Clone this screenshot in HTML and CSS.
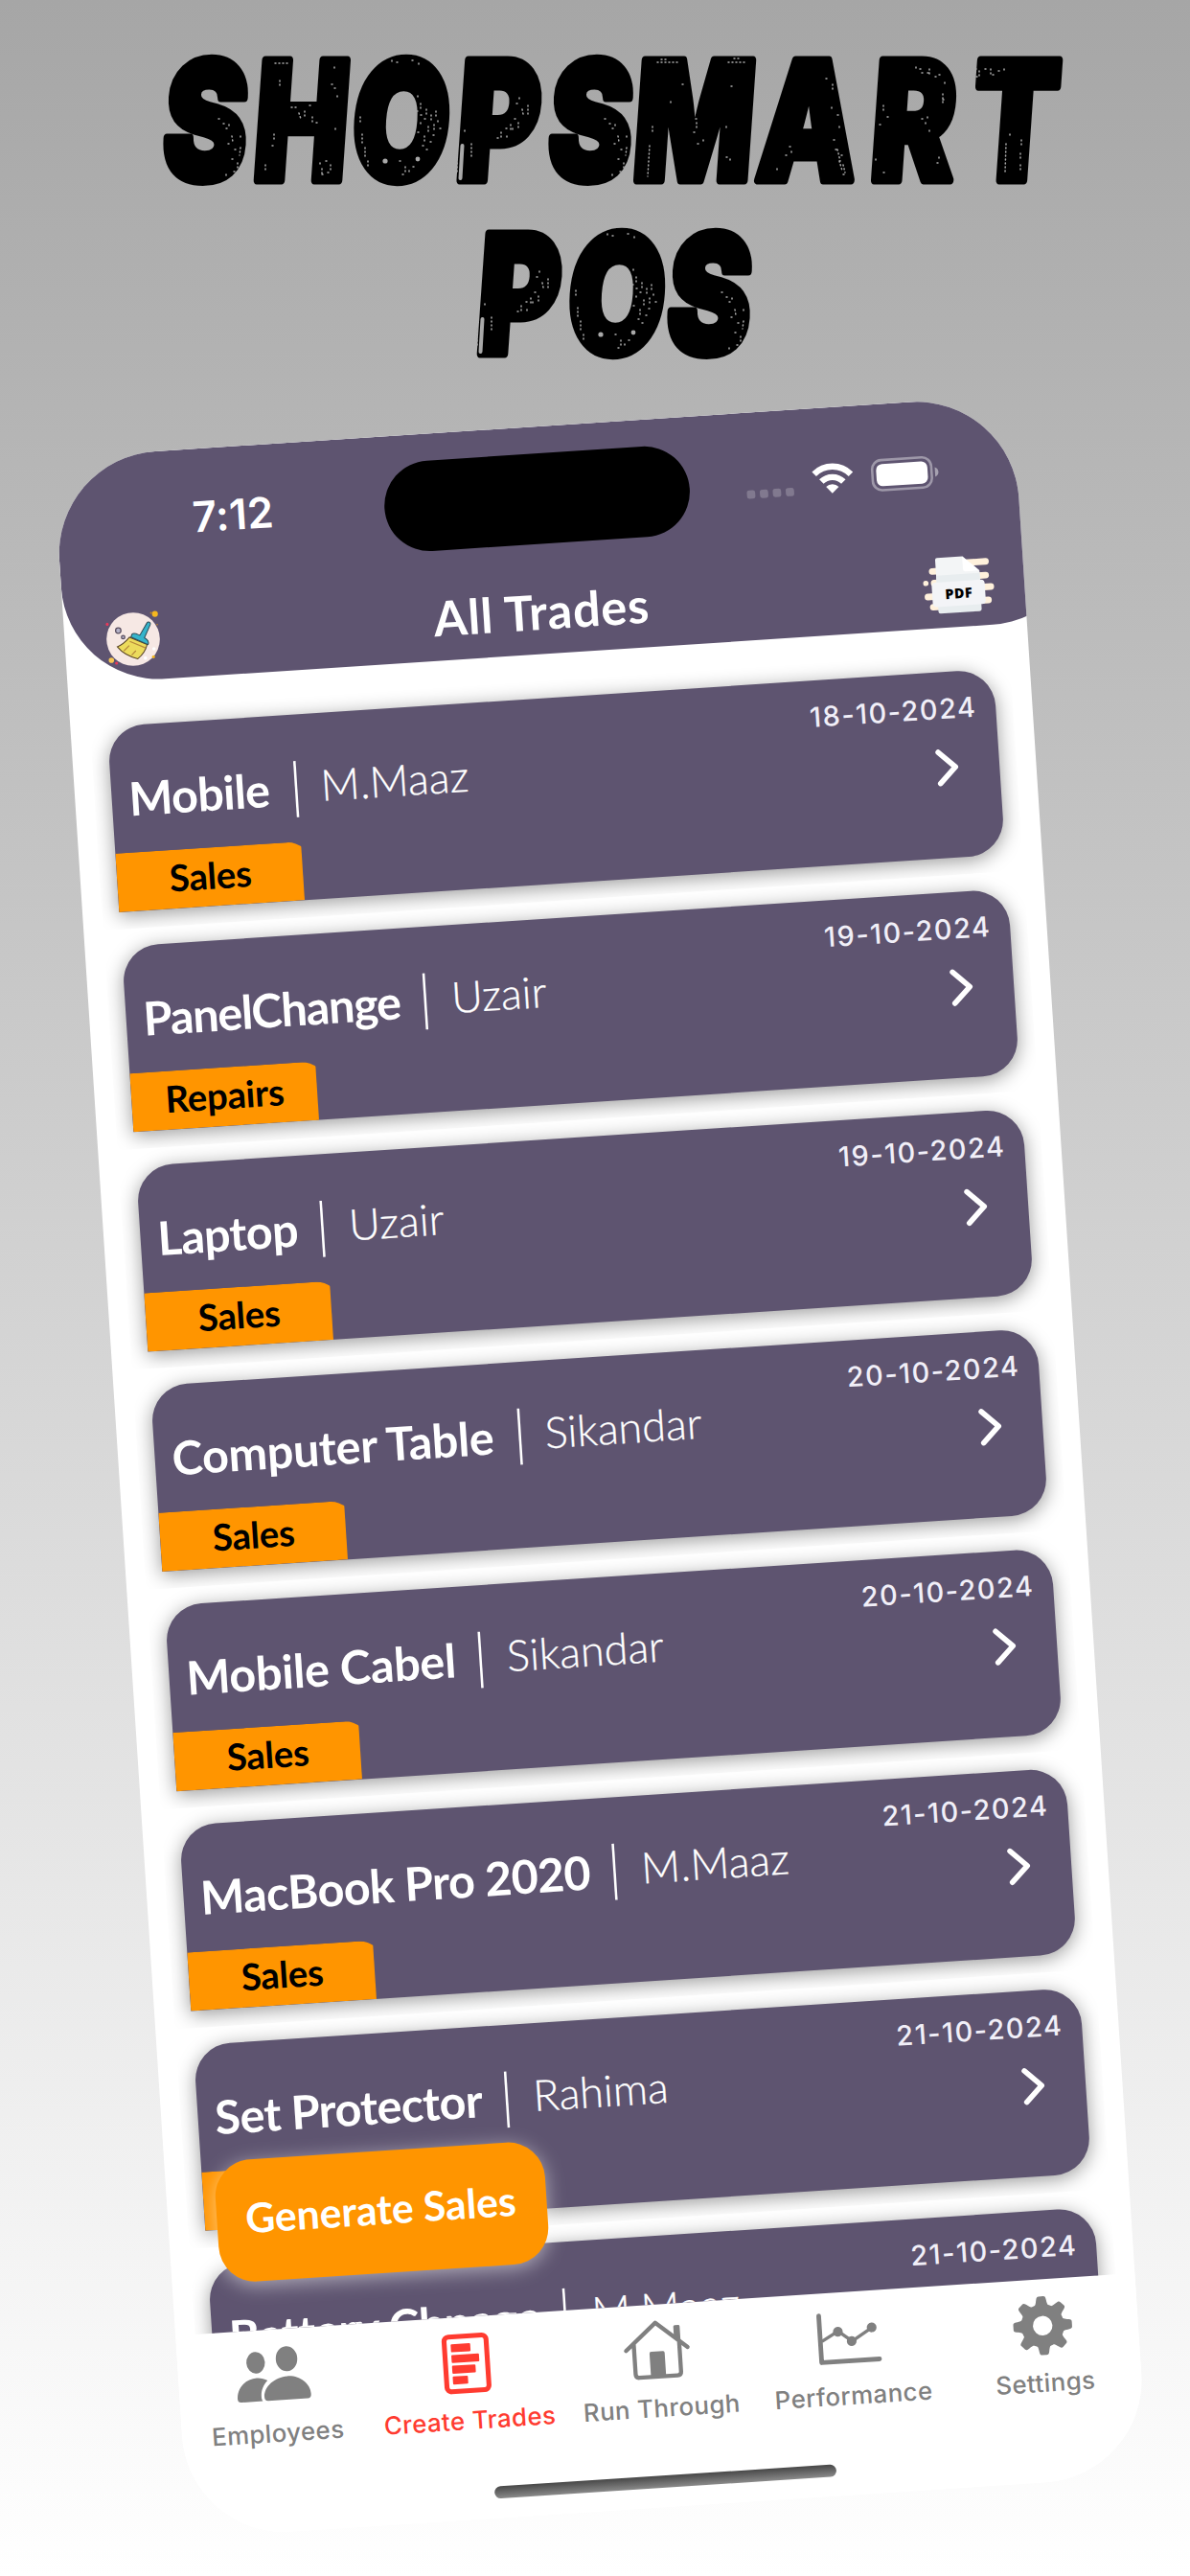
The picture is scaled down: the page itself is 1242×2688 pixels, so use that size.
FILE: index.html
```html
<!DOCTYPE html>
<html lang="en">
<head>
<meta charset="utf-8">
<title>ShopSmart POS</title>
<link rel="stylesheet" href="styles.css">
</head>
<body>
<main class="poster">
  <h1 class="headline">
    <svg width="1242" height="420" viewBox="0 0 1242 420">
      <defs>
        <g id="wear-s">
          <path d="M64 76h2M70 84l1 6M73 98h3M79 96l-1 8M70 108h4M76 112v5M61 71h2M67 72v3M79 84v3M66 92h1M72 121h2M64 124v2M56 66h1"/>
        </g>
        <g id="wear-o">
          <path d="M36 7v4M41 9h4M57 7h4M64 10v3M63 44v4M66 52v5M72 58v6M77 64v8M82 60v6M80 74v5M74 76v8M70 86v5M66 72v4M63 82h3M76 92h4M84 70v4M62 60h2M70 68h2M86 78h2M68 96h2M66 64h2M79 85h3M72 100h3M5 84v12M8 98v10M3 66v8M11 112v6M50 118v6M47 126h3M54 122v4M58 118h2M44 112h2"/>
          <circle cx="29" cy="112" r="2.6" class="dot"/><circle cx="63" cy="110" r="2.4" class="dot"/>
        </g>
        <g id="wear-p">
          <path d="M19 92v14M4 104v20M69 44v4M72 56l1 5M64 66h3M60 72v5M55 76h2M50 80v8M56 84v4M62 76v4M46 86h3M78 52v12M66 50h2M68 70v5M12 78v3"/>
          <path d="M9.500 94l-2 34" class="gash"/>
        </g>
      </defs>
      <g class="letters">
        <text transform="translate(-5 188) skewX(-4) scale(.76 1)" x="284 415.800 552.600 686.500 813 955 1111 1256.500 1396">SHOPSMART</text>
        <text transform="translate(-5 368.500) skewX(-4) scale(.76 1)" x="714.500 848.700 976">POS</text>
      </g>
      <g class="wear">
        <use href="#wear-s" x="172" y="58"/>
        <use href="#wear-o" x="373" y="56"/>
        <use href="#wear-p" x="473" y="58"/>
        <use href="#wear-s" x="575" y="58"/>
        <use href="#wear-p" x="494" y="239"/>
        <use href="#wear-o" x="598" y="237"/>
        <use href="#wear-s" x="697" y="239"/>
        <path d="M287 66h14M292 84v8M304 112h5M312 118l2 6M318 116v5M323 110h4M326 122v5M330 128h3M349 70v4M346 88h2M352 100v3M349 92h2M350 134v4M286 140v5M284 152h2M277 172v6M336 182h2M336 176v6M342 180h4M345 172v5M340 168h2M334 170v3"/>
        <path d="M686 65h22M760 65h18M690 62h6M766 61h5M678 152l-2 32M681 132v6M712 88h3M700 106v3M727 128v5M724 138h3M726 124h2M734 146v4M728 150h2M758 132v3M763 90h2M758 164h2M762 166v3"/>
        <path d="M869 88v5M862 82h2M874 120h3M868 112v4M876 132v4M870 146h3M826 158v4M820 162h3M811 176v4M824 153h2M876 168l3 10M874 156l3 12M880 172l2 8M878 162h2M880 182h2M872 156h3"/>
        <path d="M956 70v4M962 76h3M970 72v5M976 80h3M968 76h2M980 78h2M986 86v4M960 72h2M984 98v10M922 110v6M926 122h2M918 130h3M968 122v4M962 124h3M966 128v4M970 136v3M984 104h2M978 170h3M980 164v4M914 166v4M922 180h4"/>
        <path d="M1018 72h3M1022 74v5M1028 72h2M1034 72v6M1042 74h3M1019 80h3M1036 78h2M1048 72v3M1050 150l-1 30M1066 146v8M1065 160v6M1065 172v7M1054 140v3"/>
      </g>
    </svg>
  </h1>

  <section class="phone">
    <header class="topbar">
      <div class="status">
        <span class="time">7:12</span>
        <span class="island"></span>
        <svg class="signals" width="80" height="16" viewBox="282 21 80 16">
          <g fill="#fff" fill-opacity=".22">
            <rect x="282.200" y="31.800" width="3.400" height="3.400" rx="1"/><rect x="287.500" y="31.800" width="3.400" height="3.400" rx="1"/><rect x="292.800" y="31.800" width="3.400" height="3.400" rx="1"/><rect x="298.100" y="31.800" width="3.400" height="3.400" rx="1"/>
          </g>
          <g transform="rotate(3.740 317.500 29)">
            <path d="M310 27.300a10.600 10.600 0 0 1 15 0M313 30.400a6.400 6.400 0 0 1 9 0" fill="none" stroke="#fff" stroke-width="2.500"/>
            <path d="M317.500 35.200l-2.600-2.700a3.700 3.700 0 0 1 5.200 0z" fill="#fff"/>
          </g>
          <rect x="333.900" y="22.900" width="24.200" height="12.300" rx="3.800" fill="none" stroke="#fff" stroke-opacity=".4"/>
          <rect x="335.500" y="24.500" width="21" height="9.100" rx="2.500" fill="#fff"/>
          <path d="M359.500 27.200v4q1.400-.6 1.400-2t-1.400-2z" fill="#fff" fill-opacity=".45"/>
        </svg>
      </div>
      <div class="titlebar">
        <svg class="clean" width="26" height="26" viewBox="-13 -13 26 26">
          <g transform="rotate(3.740)">
            <circle r="10.900" fill="#f6e8e4"/>
            <circle cx="8.900" cy="-10.300" r="1.200" fill="#f5b81f"/><circle cx="7.300" cy="-10.800" r=".4" fill="#c98a20"/>
            <circle cx="-10.600" cy="-6.100" r=".6" fill="#e8395a"/><circle cx="-8.900" cy="8.600" r="1.100" fill="#f7c653"/>
            <circle cx="-6.800" cy="9.800" r=".6" fill="#e8395a"/><circle cx="8.300" cy="7.200" r=".6" fill="#f5b81f"/><circle cx="9.800" cy="-6" r=".3" fill="#c98a20"/>
            <circle cx="8.500" cy="3.900" r=".7" fill="#fff"/><circle cx="5" cy="7.700" r=".7" fill="#fff"/>
            <circle cx="-6.100" cy="-3.500" r="1.100" fill="#b4b2c8" stroke="#5a4f60" stroke-width=".5"/><circle cx="-4.100" cy="-.8" r=".7" fill="#b4b2c8" stroke="#5a4f60" stroke-width=".5"/>
            <path d="M-1.500-.8C-3 1-4.800 2.500-6.500 3.100c1.800 2.200 4.700 4 8.400 4.900C3.800 6.400 5.200 4.400 5.700 2.200z" fill="#ecdb5c" stroke="#5a4526" stroke-width=".4"/>
            <path d="M-1.600 2.600l-2.200 2.200M1.100 4.700L-.6 6.500M-1.400.9l6.500 2.700" fill="none" stroke="#b78a3c" stroke-width=".5"/>
            <path d="M-.5-2c.8-.8 1.800-.2 3.200.4L5.600-6.600c.5-.8 1.700-.3 1.400.6L4.600-.6C6 .2 6.600.9 6.100 2.200L-.9-.9z" fill="#35b4cb" stroke="#2c4a56" stroke-width=".4"/>
          </g>
        </svg>
        <h2>All Trades</h2>
        <svg class="pdf" width="30" height="26" viewBox="-15 -13 30 26">
          <path d="M3-8.600h8.700M-10.300-5.900h5M6-3h5.400M-9.800-1.100h5M6 1.800h7.200M-12.700 4.400h5M6 7.200h5.900M-10.800 8.700h5" stroke="#fff1dc" stroke-width="2.700" stroke-linecap="round" transform="translate(0 -.4)"/>
          <circle cx="-13.200" cy="-1.600" r="1.100" fill="#fff1dc"/>
          <path d="M-8-11.700H2.400L9-5.500V-1H-8.800v-9.900q0-.8.800-.8z" fill="#f3f5f6"/>
          <path d="M2.300-11.700V-6.400q0 .9.900.9H9z" fill="#fff"/>
          <path d="M-8.800-4.500H9v4H-8.800zM-8.800 7H8.900v3.200q0 .9-.9.900H-7.900q-.9 0-.9-.9z" fill="#e8edef"/>
          <rect x="-10.900" y="-1.700" width="21.700" height="10" rx="1.600" fill="#f3f4f7"/>
          <text x="0" y="5.300" class="pdf-text">PDF</text>
        </svg>
      </div>
    </header>

    <div class="list">
      <article class="row"><div class="card"><time>18-10-2024</time><div class="line"><b class="snug">Mobile</b><i></i><span>M.Maaz</span></div><svg class="chev" width="10" height="16" viewBox="0 0 10 16"><path d="M1.300 1.600 8 8 1.500 14.400"/></svg><em>Sales</em></div></article>
      <article class="row"><div class="card"><time>19-10-2024</time><div class="line"><b class="tight">PanelChange</b><i></i><span>Uzair</span></div><svg class="chev" width="10" height="16" viewBox="0 0 10 16"><path d="M1.300 1.600 8 8 1.500 14.400"/></svg><em>Repairs</em></div></article>
      <article class="row"><div class="card"><time>19-10-2024</time><div class="line"><b class="snug">Laptop</b><i></i><span>Uzair</span></div><svg class="chev" width="10" height="16" viewBox="0 0 10 16"><path d="M1.300 1.600 8 8 1.500 14.400"/></svg><em>Sales</em></div></article>
      <article class="row"><div class="card"><time>20-10-2024</time><div class="line"><b>Computer Table</b><i></i><span>Sikandar</span></div><svg class="chev" width="10" height="16" viewBox="0 0 10 16"><path d="M1.300 1.600 8 8 1.500 14.400"/></svg><em>Sales</em></div></article>
      <article class="row"><div class="card"><time>20-10-2024</time><div class="line"><b>Mobile Cabel</b><i></i><span>Sikandar</span></div><svg class="chev" width="10" height="16" viewBox="0 0 10 16"><path d="M1.300 1.600 8 8 1.500 14.400"/></svg><em>Sales</em></div></article>
      <article class="row"><div class="card"><time>21-10-2024</time><div class="line"><b class="snug">MacBook Pro 2020</b><i></i><span>M.Maaz</span></div><svg class="chev" width="10" height="16" viewBox="0 0 10 16"><path d="M1.300 1.600 8 8 1.500 14.400"/></svg><em>Sales</em></div></article>
      <article class="row"><div class="card"><time>21-10-2024</time><div class="line"><b class="snug">Set Protector</b><i></i><span>Rahima</span></div><svg class="chev" width="10" height="16" viewBox="0 0 10 16"><path d="M1.300 1.600 8 8 1.500 14.400"/></svg><em>Sales</em></div></article>
      <article class="row"><div class="card"><time>21-10-2024</time><div class="line"><b class="snug">Battery Chnage</b><i></i><span>M.Maaz</span></div></div></article>
    </div>

    <button class="fab">Generate Sales</button>

    <nav class="tabs">
      <a class="tab"><svg width="32" height="28" viewBox="-16 -14 32 28">
        <ellipse cx="-7" cy="-5.900" rx="3.800" ry="4.400"/><ellipse cx="5.700" cy="-6.700" rx="4.400" ry="5.100"/>
        <path d="M-13.800 10q-1.500 0-1.500-1.500C-15.300 4-11.500.4-7 .4c1.600 0 3.200.5 4.400 1.300C-4.500 3.300-5.700 6-5.500 8.700-5.400 9.300-5.200 9.700-5 10z"/>
        <path d="M-2.800 10q-1.500 0-1.500-1.700C-4.300 4 .5.400 5.600.4s9.200 3.600 9.200 7.900Q14.800 10 13.300 10z"/>
      </svg><span>Employees</span></a>
      <a class="tab on"><svg width="32" height="28" viewBox="-16 -14 32 28">
        <rect x="-8.600" y="-11.200" width="17.200" height="22.400" rx="1.800" fill="none" stroke="currentColor" stroke-width="2"/>
        <rect x="-6" y="-8.200" width="8" height="3.300" rx=".4"/><rect x="-6" y="-3.800" width="11.300" height="3.300" rx=".4"/><rect x="-6" y=".6" width="9.600" height="3.300" rx=".4"/><rect x="-6" y="5" width="6.200" height="3.300" rx=".4"/>
      </svg><span>Create Trades</span></a>
      <a class="tab"><svg width="32" height="28" viewBox="-16 -14 32 28">
        <path d="M-12.600-.8 0-11.500 12.600-.8M-9.300-3.200V9q0 1.500 1.500 1.500H7.800Q9.300 10.500 9.300 9V-3.200" fill="none" stroke="currentColor" stroke-width="1.700" stroke-linecap="round" stroke-linejoin="round"/>
        <path d="M7.300-5.200v-4.200q0-.6.600-.6h1.400q.6 0 .6.600v6.500zM-3.100 10.500V.9q0-.7.700-.7h4.800q.7 0 .7.700v9.600z"/>
      </svg><span>Run Through</span></a>
      <a class="tab"><svg width="32" height="28" viewBox="-16 -14 32 28">
        <path d="M-12.100-9.900V9.200H11.600" fill="none" stroke="currentColor" stroke-width="1.900" stroke-linecap="round" stroke-linejoin="round"/>
        <path d="M-11.500.6-4.600-3.200.9 1.200 9.500-3.900" fill="none" stroke="currentColor" stroke-width="1.300"/>
        <circle cx="-4.700" cy="-3" r="2"/><circle cx=".7" cy="1.200" r="2"/><circle cx="9.200" cy="-3.900" r="2"/>
      </svg><span>Performance</span></a>
      <a class="tab"><svg width="32" height="28" viewBox="-16 -14 32 28">
        <path fill="none" stroke="currentColor" stroke-width="4.800" d="M6.400 0A6.400 6.400 0 1 1-6.400 0 6.400 6.400 0 1 1 6.400 0z"/>
        <g id="teeth"><path id="tooth" d="M-3.300-7.800C-2.500-8.200-2.300-9-2-10.800-1.800-11.800-1.500-12-.9-12H.9c.6 0 .9.200 1.100 1.200C2.300-9 2.500-8.200 3.300-7.800z"/>
        <use href="#tooth" transform="rotate(45)"/><use href="#tooth" transform="rotate(90)"/><use href="#tooth" transform="rotate(135)"/></g>
        <use href="#teeth" transform="rotate(180)"/>
      </svg><span>Settings</span></a>
      <span class="home"></span>
    </nav>
  </section>
</main>
</body>
</html>
```
FILE: styles.css
```css
* { box-sizing: border-box; }

body {
  margin: 0;
  font-family: Inter, sans-serif;
}

.poster {
  width: 1242px;
  height: 2688px;
  overflow: hidden;
  background: linear-gradient(#a6a6a6, #fff);
}

.headline {
  margin: 0;
  height: 478px;
}
.headline svg { display: block; }
.letters {
  font: 900 172px Inter, sans-serif;
  text-anchor: middle;
  stroke: #000;
  stroke-width: 9px;
  stroke-linejoin: round;
}
.wear {
  fill: none;
  stroke: #a9a9a9;
  stroke-width: 1.500px;
  stroke-linecap: round;
  stroke-dasharray: 1 3;
}
.dot { fill: #a9a9a9; stroke: none; }
.gash { stroke-width: 4px; stroke-dasharray: none; }

/* The phone is laid out at 393x852 points, then enlarged and tilted. */
.phone {
  position: relative;
  display: flex;
  flex-direction: column;
  width: 393px;
  height: 852px;
  margin-left: 54.800px;
  overflow: hidden;
  border-radius: 42px;
  background: #fff;
  transform-origin: 0 0;
  transform: rotate(-3.740deg) scale(2.5534);
}

.topbar {
  flex: none;
  width: 419px;
  height: 93px;
  border-radius: 0 0 40px 40px;
  background: #5e5470;
  color: #fff;
}
.status {
  display: flex;
  align-items: flex-start;
  width: 393px;
  height: 59.500px;
  padding-top: 11px;
}
.time {
  width: 134px;
  padding: 7.200px 0 0 55.500px;
  font-size: 17.200px;
  line-height: 20px;
  font-weight: 600;
  letter-spacing: .1px;
}
.island {
  width: 125.300px;
  height: 37px;
  border-radius: 19px;
  background: #000;
}
.signals { margin: 10px 0 0 22.700px; overflow: visible; }

.titlebar {
  display: grid;
  grid-template-columns: 14.500px 26px 1fr 30px 12px;
  align-items: center;
  width: 393px;
  height: 33px;
}
.titlebar svg { overflow: visible; }
.clean { grid-column: 2; }
.titlebar h2 {
  margin: -1.200px 0 0 -1px;
  font: 700 19.800px/33px Lato, sans-serif;
  letter-spacing: .3px;
  text-align: center;
}
.pdf-text {
  font: 800 5.600px "Open Sans", sans-serif;
  letter-spacing: .2px;
  text-anchor: middle;
}

.list {
  flex: none;
  height: 676.300px;
  padding: 11.200px 7.600px 0;
  overflow: hidden;
}
.row {
  height: 90px;
  padding: 7px 7.400px;
  overflow: hidden;
  background: #fff;
}
.card {
  position: relative;
  height: 76px;
  border-radius: 15px 15px 15px 0;
  background: #5e5470;
  color: #fff;
  box-shadow: 0 1.500px 8px rgba(0, 0, 0, .4);
}
.card time {
  position: absolute;
  top: 8px;
  right: 7.800px;
  color: #f1eff8;
  font-size: 11.300px;
  line-height: 14px;
  font-weight: 500;
  letter-spacing: .6px;
}
.line {
  display: flex;
  align-items: center;
  height: 60px;
  padding-left: 7px;
  font-family: Lato, sans-serif;
  white-space: nowrap;
}
.line b {
  margin-top: -2.200px;
  font-size: 19px;
  letter-spacing: -.1px;
}
.line .snug { letter-spacing: -.25px; }
.line .tight { letter-spacing: -.45px; }
.line i {
  width: 1px;
  height: 23px;
  margin: 0 10px;
  background: #fff;
}
.line span {
  margin-top: -1px;
  font-size: 17.600px;
  font-weight: 300;
  -webkit-text-stroke: .12px #fff;
}
.chev {
  position: absolute;
  right: 16px;
  top: 30.500px;
}
.chev path {
  fill: none;
  stroke: #fff;
  stroke-width: 2.200px;
  stroke-linecap: round;
  stroke-linejoin: round;
}
.card em {
  position: absolute;
  left: 0;
  bottom: 0;
  width: 76.400px;
  height: 24px;
  overflow: hidden;
  color: #000;
  font: 700 15px/22.600px Lato, sans-serif;
  letter-spacing: -.1px;
  text-align: center;
  isolation: isolate;
}
.card em::before {
  content: "";
  position: absolute;
  z-index: -1;
  inset: 0 -3.400px 0 0;
  border-top-right-radius: 10px;
  background: #ff9500;
}

.fab {
  position: absolute;
  left: 19.600px;
  top: 699px;
  width: 135px;
  height: 50.200px;
  padding: 0 0 1px;
  border: 0;
  border-radius: 15px;
  background: #ff9500;
  color: #fff;
  font: 700 16.700px/49px Lato, sans-serif;
  box-shadow: 0 1.500px 8px rgba(255, 255, 255, .5);
}

.tabs {
  display: grid;
  grid-template: 55px 1fr / repeat(5, 1fr);
  flex: 1;
  background: #fff;
}
.tab {
  display: flex;
  flex-direction: column;
  align-items: center;
  padding-top: 4.700px;
  color: #808080;
  font-size: 10.100px;
  line-height: 13px;
  font-weight: 500;
  letter-spacing: .18px;
  white-space: nowrap;
}
.tab svg { fill: currentColor; }
.tab span { margin-top: 3px; }
.tab.on { color: #ff3b30; }
.home {
  grid-column: 1 / -1;
  justify-self: center;
  width: 140px;
  height: 5px;
  margin-top: 15px;
  border-radius: 3px;
  background: linear-gradient(#484848, #8a8a8a);
}
```
